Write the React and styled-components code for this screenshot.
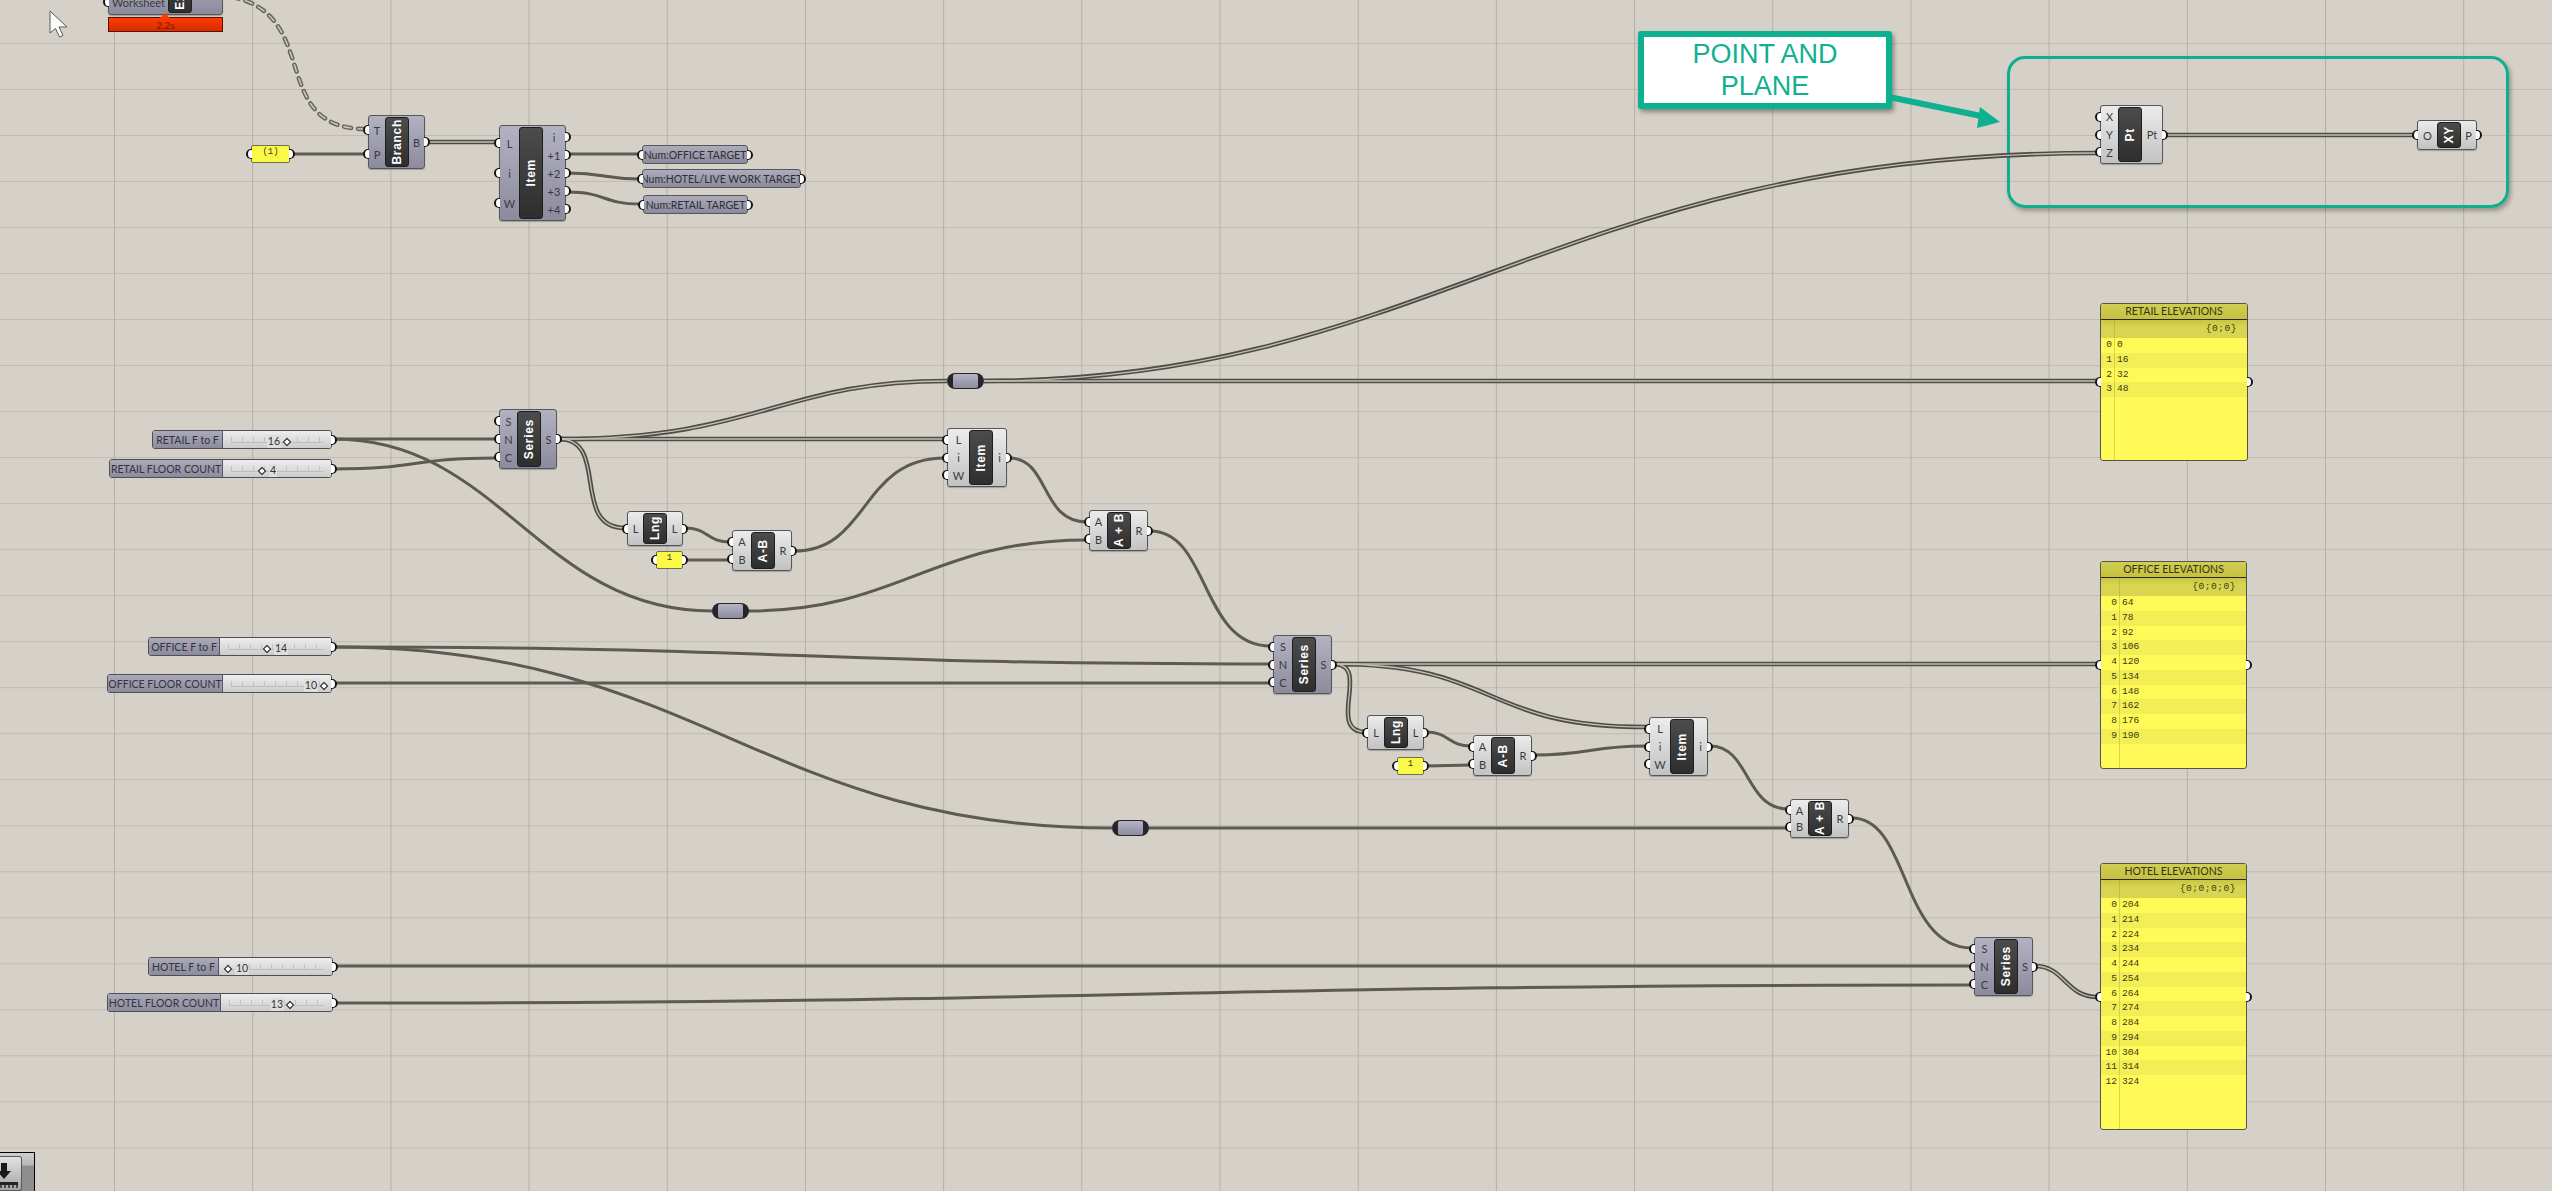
import styled, { createGlobalStyle } from "styled-components";

/* ------------------------------- CANVAS DATA ------------------------------ */

// x, y, w, h: box of the component. l: width of the input column
const nodes = [
  { x: 108, y: -31, w: 115, h: 46, l: 59, tone: "purple", name: "Excel", ins: ["", "Worksheet"], outs: [] },
  { x: 368, y: 115, w: 57, h: 54, l: 16, tone: "purple", name: "Branch", ins: ["T", "P"], outs: ["B"] },
  { x: 499, y: 125, w: 67, h: 96, l: 19, tone: "purple", name: "Item", ins: ["L", "i", "W"], outs: ["i", "+1", "+2", "+3", "+4"] },
  { x: 2100, y: 105, w: 63, h: 59, l: 17, tone: "light", name: "Pt", ins: ["X", "Y", "Z"], outs: ["Pt"] },
  { x: 2417, y: 120, w: 60, h: 30, l: 19, tone: "light", name: "XY", ins: ["O"], outs: ["P"] },
  { x: 499, y: 409, w: 58, h: 60, l: 17, tone: "purple", name: "Series", ins: ["S", "N", "C"], outs: ["S"] },
  { x: 627, y: 511, w: 56, h: 35, l: 15, tone: "light", name: "Lng", ins: ["L"], outs: ["L"] },
  { x: 732, y: 530, w: 60, h: 41, l: 18, tone: "light", name: "A-B", ins: ["A", "B"], outs: ["R"] },
  { x: 947, y: 428, w: 60, h: 59, l: 21, tone: "light", name: "Item", ins: ["L", "i", "W"], outs: ["i"] },
  { x: 1089, y: 510, w: 59, h: 41, l: 17, tone: "light", name: "A + B", ins: ["A", "B"], outs: ["R"] },
  { x: 1273, y: 635, w: 59, h: 59, l: 18, tone: "purple", name: "Series", ins: ["S", "N", "C"], outs: ["S"] },
  { x: 1367, y: 715, w: 57, h: 35, l: 16, tone: "light", name: "Lng", ins: ["L"], outs: ["L"] },
  { x: 1473, y: 735, w: 59, h: 41, l: 17, tone: "light", name: "A-B", ins: ["A", "B"], outs: ["R"] },
  { x: 1649, y: 717, w: 59, h: 59, l: 20, tone: "light", name: "Item", ins: ["L", "i", "W"], outs: ["i"] },
  { x: 1790, y: 799, w: 59, h: 39, l: 17, tone: "light", name: "A + B", ins: ["A", "B"], outs: ["R"] },
  { x: 1974, y: 937, w: 59, h: 59, l: 19, tone: "purple", name: "Series", ins: ["S", "N", "C"], outs: ["S"] },
];

const sliders = [
  { x: 152, y: 430, w: 180, label: "RETAIL F to F", split: 70, grip: 286, value: "16", side: "left" },
  { x: 109, y: 459, w: 223, label: "RETAIL FLOOR COUNT", split: 113, grip: 261, value: "4", side: "right" },
  { x: 148, y: 637, w: 184, label: "OFFICE F to F", split: 71, grip: 266, value: "14", side: "right" },
  { x: 107, y: 674, w: 225, label: "OFFICE FLOOR COUNT", split: 115, grip: 323, value: "10", side: "left" },
  { x: 148, y: 957, w: 185, label: "HOTEL F to F", split: 70, grip: 227, value: "10", side: "right" },
  { x: 107, y: 993, w: 226, label: "HOTEL FLOOR COUNT", split: 113, grip: 289, value: "13", side: "left" },
];

const numParams = [
  { x: 642, y: 145, w: 106, text: "Num:OFFICE TARGET" },
  { x: 642, y: 169, w: 159, text: "Num:HOTEL/LIVE WORK TARGET" },
  { x: 643, y: 195, w: 105, text: "Num:RETAIL TARGET" },
];

const yellowParams = [
  { x: 251, y: 145, w: 39, text: "(1)" },
  { x: 656, y: 551, w: 27, text: "1" },
  { x: 1397, y: 757, w: 27, text: "1" },
];

const relays = [
  { x: 947, y: 373 },
  { x: 712, y: 603 },
  { x: 1112, y: 820 },
];

const seq = (from, step, count) => Array.from({ length: count }, (_, i) => from + i * step);

const panels = [
  { x: 2100, y: 303, w: 148, h: 158, col: 13, name: "RETAIL ELEVATIONS", path: "{0;0}", rows: seq(0, 16, 4) },
  { x: 2100, y: 561, w: 147, h: 208, col: 18, name: "OFFICE ELEVATIONS", path: "{0;0;0}", rows: seq(64, 14, 10) },
  { x: 2100, y: 863, w: 147, h: 267, col: 18, name: "HOTEL ELEVATIONS", path: "{0;0;0;0}", rows: seq(204, 10, 13) },
];

const wires = [
  "M427 142 L496 142",
  "M559 439 L945 439",
  "M559 439 C760 439 780 381 947 381",
  "M559 439 C610 439 570 528 625 528",
  "M984 381 L2098 381",
  "M984 381 C1430 381 1560 153 2098 153",
  "M2165 135 L2415 135",
  "M1334 664 L2098 664",
  "M1334 664 C1500 664 1480 727 1646 727",
  "M1334 664 C1372 664 1325 732 1366 732",
  "M2035 966 C2065 966 2065 997 2098 997",
];

const singles = [
  "M292 154 L365 154",
  "M568 154 L640 154",
  "M568 173 C605 173 603 179 640 179",
  "M568 192 C605 192 603 204 640 204",
  "M334 439 L496 439",
  "M334 439 C500 439 540 611 712 611",
  "M334 469 C420 469 410 458 496 458",
  "M685 528 C708 528 707 542 730 542",
  "M685 560 L730 560",
  "M794 551 C870 551 860 458 945 458",
  "M748 611 C900 611 930 540 1087 540",
  "M1009 458 C1050 458 1040 522 1087 522",
  "M1150 531 C1210 531 1200 646 1271 646",
  "M334 647 C800 647 800 664 1271 664",
  "M334 647 C700 647 760 828 1112 828",
  "M334 683 L1271 683",
  "M1426 732 C1449 732 1448 746 1471 746",
  "M1426 766 L1471 765",
  "M1534 755 C1590 755 1590 746 1646 746",
  "M1710 746 C1750 746 1745 809 1788 809",
  "M1149 828 L1788 828",
  "M1852 818 C1910 818 1900 948 1972 948",
  "M334 966 L1972 966",
  "M334 1003 C1100 1003 1200 985 1972 985",
];

/* ------------------------------- COMPONENTS ------------------------------- */

const App = () => {
  return (
    <>
      <GlobalStyle />
      <Canvas>
        <GroupBox />

        <WireLayer viewBox="0 0 2552 1191">
          <DashOuter d="M232 -3 C322 15 268 127 364 129" />
          <DashInner d="M232 -3 C322 15 268 127 364 129" />
          {singles.map(d => (
            <SingleWire key={d} d={d} />
          ))}
          {wires.map(d => (
            <ListWire key={d} d={d} />
          ))}
          {wires.map(d => (
            <ListCore key={d} d={d} />
          ))}
        </WireLayer>

        {nodes.map(n => (
          <Node key={n.x + "-" + n.y} $x={n.x} $y={n.y} $w={n.w} $h={n.h} $tone={n.tone}>
            <Ports style={{ width: n.l }}>
              {n.ins.map(p => (
                <PortRow key={p}>
                  <Port $side="in" />
                  {p}
                </PortRow>
              ))}
            </Ports>
            <Capsule>
              <span>{n.name}</span>
            </Capsule>
            <Ports $grow>
              {n.outs.map(p => (
                <PortRow key={p}>
                  {p}
                  <Port $side="out" />
                </PortRow>
              ))}
            </Ports>
          </Node>
        ))}

        <TimeBar>2.2s</TimeBar>

        {sliders.map(s => (
          <Slider key={s.label} $x={s.x} $y={s.y} $w={s.w}>
            <SliderLabel style={{ width: s.split }}>{s.label}</SliderLabel>
            <SliderTrack>
              <Rail>
                <Grip style={{ left: s.grip - s.x - s.split - 8 }}>
                  <GripValue $side={s.side}>{s.value}</GripValue>
                </Grip>
              </Rail>
              <Port $side="out" />
            </SliderTrack>
          </Slider>
        ))}

        {numParams.map(p => (
          <NumParam key={p.text} $x={p.x} $y={p.y} $w={p.w}>
            <Port $side="in" />
            {p.text}
            <Port $side="out" />
          </NumParam>
        ))}

        {yellowParams.map(p => (
          <YellowParam key={p.x} $x={p.x} $y={p.y} $w={p.w}>
            <Port $side="in" />
            {p.text}
            <Port $side="out" />
          </YellowParam>
        ))}

        {relays.map(r => (
          <Relay key={r.x} $x={r.x} $y={r.y}>
            <span />
          </Relay>
        ))}

        {panels.map(p => (
          <Panel key={p.name} $x={p.x} $y={p.y} $w={p.w} $h={p.h}>
            <Port $side="in" />
            <PanelTitle>{p.name}</PanelTitle>
            <PanelBody $col={p.col}>
              <PathBand>{p.path}</PathBand>
              {p.rows.map((v, i) => (
                <DataRow key={i} $odd={i % 2 === 1}>
                  <RowIndex style={{ width: p.col }}>{i}</RowIndex>
                  <span>{v}</span>
                </DataRow>
              ))}
            </PanelBody>
            <Port $side="out" />
          </Panel>
        ))}

        <Callout>
          POINT AND
          <br />
          PLANE
        </Callout>
        <ArrowLayer viewBox="0 0 2552 1191">
          <line x1="1889" y1="97" x2="1986" y2="117" />
          <polygon points="2000,122 1980,107 1977,128" />
        </ArrowLayer>

        <Pointer viewBox="0 0 20 28">
          <path d="M1 1 L1 23 L6.5 18.5 L10.5 27 L14 25.5 L10 17 L18 17 Z" />
        </Pointer>

        <DockButton>
          <DockFace>
            <svg width="22" height="32" viewBox="0 0 22 32">
              <path d="M1 6 H7 V14 H11 L4 22 L-3 14 H1 Z" fill="#1a1a1a" />
              <path d="M-2 25 H18 V28 H-2 Z" fill="#222" />
              <path d="M1 28 V31 M5 28 V31 M9 28 V31 M13 28 V31 M17 28 V31" stroke="#222" strokeWidth="1.4" />
            </svg>
          </DockFace>
        </DockButton>
      </Canvas>
    </>
  );
};

export default App;

/* ---------------------------- STYLED COMPONENTS --------------------------- */

const GlobalStyle = createGlobalStyle`
  html, body {
    margin: 0;
    padding: 0;
    overflow: hidden;
    background: #d4d0c8;
  }

  body {
    font-family: Lato, "Liberation Sans", sans-serif;
  }
`;

const Canvas = styled.div`
  position: relative;
  width: 2552px;
  height: 1191px;
  overflow: hidden;
  background-color: #d5d1c9;
  background-image:
    linear-gradient(to right, #b4b0a8 1px, transparent 1px),
    linear-gradient(to bottom, #bfbbb3 1px, transparent 1px);
  background-size: 138.2px 100%, 100% 46.03px;
  background-position: 114px 0, 0 43px;
`;

const placed = `
  position: absolute;
  box-sizing: border-box;
`;

const GroupBox = styled.div`
  ${placed}
  left: 2007px;
  top: 56px;
  width: 502px;
  height: 152px;
  border: 3px solid #0fae8e;
  border-radius: 18px;
  box-shadow: 2px 3px 4px rgba(60, 60, 50, 0.4);
`;

const WireLayer = styled.svg`
  position: absolute;
  inset: 0;
  width: 2552px;
  height: 1191px;
  fill: none;
`;

const SingleWire = styled.path`
  stroke: #5c5a52;
  stroke-width: 3;
`;

const ListWire = styled.path`
  stroke: #4e4c46;
  stroke-width: 4.6;
`;

const ListCore = styled.path`
  stroke: #c2beb4;
  stroke-width: 1.3;
`;

const DashOuter = styled.path`
  stroke: #66645c;
  stroke-width: 4.5;
  stroke-dasharray: 7 7;
  stroke-linecap: round;
`;

const DashInner = styled.path`
  stroke: #c9c6bd;
  stroke-width: 1.6;
  stroke-dasharray: 7 7;
  stroke-linecap: round;
`;

const tones = {
  purple: "linear-gradient(#b2b2c2, #8b8b9d)",
  light: "linear-gradient(#ececec, #c2c2c2)",
};

const Node = styled.div`
  ${placed}
  left: ${p => p.$x}px;
  top: ${p => p.$y}px;
  width: ${p => p.$w}px;
  height: ${p => p.$h}px;
  padding: 2px 0;
  display: flex;
  background: ${p => tones[p.$tone]};
  border: 1px solid #55555a;
  border-radius: 3px;
  box-shadow: 0 1px 1px rgba(70, 70, 60, 0.35);
  color: #3a3a3e;
  font-size: 11px;
`;

const Ports = styled.div`
  display: flex;
  flex-direction: column;
  flex: ${p => (p.$grow ? 1 : "none")};
  position: static;
`;

const PortRow = styled.div`
  flex: 1;
  display: flex;
  align-items: center;
  justify-content: center;
  position: relative;
  white-space: nowrap;
`;

const Port = styled.i`
  position: absolute;
  top: 50%;
  width: 6px;
  height: 10px;
  margin-top: -5px;
  box-sizing: border-box;
  background: #fff;
  ${p =>
    p.$side === "in"
      ? `left: -6px;
         border-left: 2px solid #111;
         border-top: 1.5px solid #111;
         border-bottom: 1.5px solid #111;
         border-radius: 5px 0 0 5px;`
      : `right: -6px;
         border-right: 2px solid #111;
         border-top: 1.5px solid #111;
         border-bottom: 1.5px solid #111;
         border-radius: 0 5px 5px 0;`}
`;

const Capsule = styled.div`
  flex: none;
  width: 22px;
  margin: -1px 0;
  display: flex;
  align-items: center;
  justify-content: center;
  overflow: hidden;
  background: linear-gradient(#4c4c4c, #2e2e2e);
  border: 1px solid #1e1e1e;
  border-radius: 3px;

  span {
    writing-mode: vertical-rl;
    transform: rotate(180deg);
    color: #fff;
    font-family: "Liberation Sans", sans-serif;
    font-size: 12px;
    font-weight: 700;
    letter-spacing: 0.7px;
    white-space: nowrap;
  }
`;

const TimeBar = styled.div`
  ${placed}
  left: 108px;
  top: 17px;
  width: 115px;
  height: 15px;
  display: flex;
  align-items: center;
  justify-content: center;
  background: linear-gradient(#ff3c00, #d42c00);
  border: 1px solid #5a1000;
  color: #7a1400;
  font-size: 10px;

  &::before {
    content: "";
    position: absolute;
    left: 51px;
    top: -5px;
    border-left: 5px solid transparent;
    border-right: 5px solid transparent;
    border-bottom: 5px solid #ff3c00;
  }
`;

const Slider = styled.div`
  ${placed}
  left: ${p => p.$x}px;
  top: ${p => p.$y}px;
  width: ${p => p.$w}px;
  height: 19px;
  display: flex;
  border: 1px solid #4e4e54;
  border-radius: 3px;
  font-size: 10.5px;
  color: #333338;
`;

const SliderLabel = styled.div`
  flex: none;
  box-sizing: border-box;
  display: flex;
  align-items: center;
  justify-content: center;
  background: linear-gradient(#aaaaba, #8b8b9d);
  border-right: 1px solid #55555a;
  border-radius: 2px 0 0 2px;
  white-space: nowrap;
`;

const SliderTrack = styled.div`
  flex: 1;
  position: relative;
  display: flex;
  align-items: center;
  padding: 0 8px;
  background: linear-gradient(#eeeeee, #cccccc);
  border-radius: 0 2px 2px 0;
`;

const Rail = styled.div`
  flex: 1;
  position: relative;
  height: 5px;
  border-bottom: 1px solid #bebebe;
  background-image: linear-gradient(to right, #c2c2c2 1px, transparent 1px);
  background-size: 11px 100%;
`;

const Grip = styled.div`
  position: absolute;
  top: 5px;
  width: 0;
  height: 0;

  &::before {
    content: "";
    position: absolute;
    left: -3px;
    top: -3px;
    width: 4px;
    height: 4px;
    background: #fff;
    border: 1px solid #111;
    transform: rotate(45deg);
  }
`;

const GripValue = styled.span`
  position: absolute;
  top: -7px;
  ${p => (p.$side === "left" ? "right: 6px;" : "left: 7px;")}
  padding: 0 1px;
  line-height: 13px;
  background: #dedede;
`;

const NumParam = styled.div`
  ${placed}
  left: ${p => p.$x}px;
  top: ${p => p.$y}px;
  width: ${p => p.$w}px;
  height: 19px;
  display: flex;
  align-items: center;
  justify-content: center;
  background: linear-gradient(#acacbc, #8b8b9d);
  border: 1px solid #55555a;
  border-radius: 3px;
  color: #2e2e33;
  font-size: 10.5px;
  white-space: nowrap;
`;

const YellowParam = styled.div`
  ${placed}
  left: ${p => p.$x}px;
  top: ${p => p.$y}px;
  width: ${p => p.$w}px;
  height: 18px;
  padding-top: 1px;
  text-align: center;
  background: #fbf947;
  border: 1px solid #6e6e50;
  border-radius: 2px;
  color: #3a3a18;
  font-family: "Liberation Mono", monospace;
  font-size: 9px;
  line-height: 11px;
`;

const Relay = styled.div`
  ${placed}
  left: ${p => p.$x}px;
  top: ${p => p.$y}px;
  width: 37px;
  height: 16px;
  padding: 1px 6px;
  background: #26262a;
  border-radius: 8px;

  span {
    display: block;
    height: 100%;
    background: linear-gradient(#b4b4c6, #8c8c9e);
    border-radius: 2px;
  }
`;

const Panel = styled.div`
  ${placed}
  left: ${p => p.$x}px;
  top: ${p => p.$y}px;
  width: ${p => p.$w}px;
  height: ${p => p.$h}px;
  display: flex;
  flex-direction: column;
  background: #fffa58;
  border: 1px solid #55554a;
  border-radius: 3px;
`;

const PanelTitle = styled.div`
  flex: none;
  height: 15px;
  line-height: 15px;
  text-align: center;
  background: linear-gradient(#d2ce52, #c4c040);
  border-bottom: 1px solid #2c2c10;
  border-radius: 2px 2px 0 0;
  color: #33331a;
  font-size: 10.5px;
  white-space: nowrap;
`;

const PanelBody = styled.div`
  flex: 1;
  position: relative;
  overflow: hidden;
  font-family: "Liberation Mono", monospace;
  font-size: 9.6px;
  color: #3a3a14;

  &::before {
    content: "";
    position: absolute;
    left: ${p => p.$col}px;
    top: 0;
    bottom: 0;
    width: 1px;
    background: rgba(150, 145, 40, 0.35);
  }
`;

const PathBand = styled.div`
  height: 18px;
  line-height: 17px;
  padding-right: 10px;
  text-align: right;
  background: linear-gradient(#c8c445, #d9d551 40%);
  letter-spacing: 0.5px;
`;

const DataRow = styled.div`
  display: flex;
  height: 14.75px;
  line-height: 13px;
  background: ${p => (p.$odd ? "#f3ee55" : "transparent")};
`;

const RowIndex = styled.span`
  flex: none;
  box-sizing: border-box;
  margin-right: 3px;
  padding-right: 2px;
  text-align: right;
`;

const Callout = styled.div`
  ${placed}
  left: 1638px;
  top: 31px;
  width: 254px;
  height: 78px;
  display: flex;
  flex-direction: column;
  justify-content: center;
  text-align: center;
  background: #fff;
  border: 6px solid #0db08f;
  border-radius: 3px;
  box-shadow: 2px 3px 4px rgba(60, 60, 50, 0.5);
  color: #10b090;
  font-family: "Liberation Sans", sans-serif;
  font-size: 27px;
  line-height: 32px;
`;

const ArrowLayer = styled.svg`
  position: absolute;
  inset: 0;
  width: 2552px;
  height: 1191px;
  fill: #0db08f;
  stroke: #0db08f;
  stroke-width: 0;
  pointer-events: none;

  line {
    stroke-width: 6;
  }
`;

const Pointer = styled.svg`
  position: absolute;
  left: 49px;
  top: 10px;
  width: 20px;
  height: 28px;

  path {
    fill: #fbfbfb;
    stroke: #5a5a5a;
    stroke-width: 1;
  }
`;

const DockButton = styled.div`
  position: absolute;
  left: 0;
  bottom: 0;
  width: 35px;
  height: 39px;
  box-sizing: border-box;
  padding-top: 3px;
  border-top: 1px solid #000;
  border-right: 1px solid #000;
  background: linear-gradient(#cfcfcf 0, #b8b8b8 12px, #8e8e8e 13px, #8e8e8e 100%);
`;

const DockFace = styled.div`
  width: 22px;
  height: 35px;
  box-sizing: border-box;
  overflow: hidden;
  background: linear-gradient(#e2e2e2, #a4a4a4);
  border: 1px solid #5a5a5a;
  border-left: none;
  border-radius: 0 3px 3px 0;
`;
